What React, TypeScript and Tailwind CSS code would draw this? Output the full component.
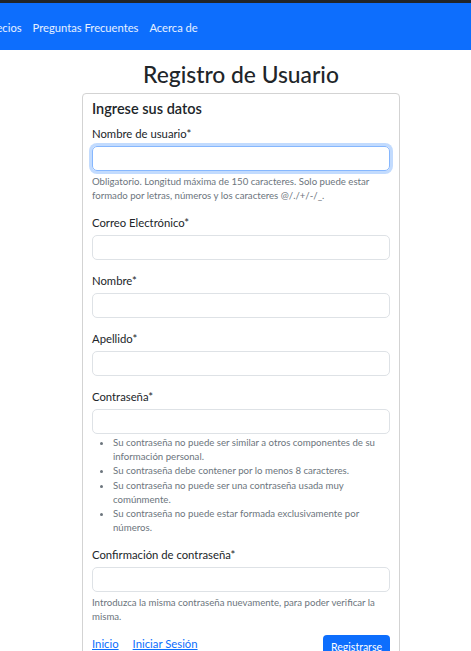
const font = { fontFamily: '"Lato", "Noto Sans", sans-serif' };

interface Field {
  label: string;
  focused?: boolean;
  help?: string;
  list?: string[];
}

const fields: Field[] = [
  {
    label: "Nombre de usuario*",
    focused: true,
    help: "Obligatorio. Longitud máxima de 150 caracteres. Solo puede estar formado por letras, números y los caracteres @/./+/-/_.",
  },
  { label: "Correo Electrónico*" },
  { label: "Nombre*" },
  { label: "Apellido*" },
  {
    label: "Contraseña*",
    list: [
      "Su contraseña no puede ser similar a otros componentes de su información personal.",
      "Su contraseña debe contener por lo menos 8 caracteres.",
      "Su contraseña no puede ser una contraseña usada muy comúnmente.",
      "Su contraseña no puede estar formada exclusivamente por números.",
    ],
  },
  {
    label: "Confirmación de contraseña*",
    help: "Introduzca la misma contraseña nuevamente, para poder verificar la misma.",
  },
];

export default function App() {
  return (
    <div className="min-h-[651px] bg-white text-[#212529] overflow-hidden" style={font}>
      <div className="h-[3px] bg-[#212529]" />
      {/* Navbar */}
      <nav className="h-[47px] bg-[#0d6efd] flex items-center pt-[3px] overflow-hidden">
        <div className="flex items-center gap-[11px] -ml-[14px] text-[11.2px] text-white/90">
          <span>Precios</span>
          <span>Preguntas Frecuentes</span>
          <span>Acerca de</span>
        </div>
      </nav>

      <div className="ml-[82px] w-[318px]">
        <h2 className="text-center text-[22.8px] font-medium leading-[28px] mt-[10px] mb-[5px]">
          Registro de Usuario
        </h2>

        <div className="border border-[#d3d3d3] rounded-[4px] px-[9px] pt-[4px]">
          <h5 className="text-[14.5px] font-semibold leading-[22px] mb-[5px]">Ingrese sus datos</h5>

          {fields.map((f, i) => (
            <div key={i} className="mb-[12px]">
              <label className="block text-[11.3px] leading-[18px] mb-[3px]">{f.label}</label>
              <input
                type="text"
                className={
                  f.focused
                    ? "block w-full h-[25px] rounded-[5px] border border-[#86b7fe] shadow-[0_0_0_3px_rgba(13,110,253,0.25)] outline-none"
                    : "block w-full h-[25px] rounded-[5px] border border-[#dee2e6] outline-none"
                }
              />
              {f.help && (
                <p className="mt-[3px] text-[9.65px] leading-[14px] text-[#6c757d]">{f.help}</p>
              )}
              {f.list && (
                <ul className="mt-[1px] pl-[21px] list-disc text-[9.65px] leading-[14.2px] text-[#6c757d]">
                  {f.list.map((t, j) => (
                    <li key={j}>{t}</li>
                  ))}
                </ul>
              )}
            </div>
          ))}

          <div className="flex items-start justify-between mt-[12px] pb-[10px]">
            <div className="flex gap-[14px] text-[11.3px] leading-[18px]">
              <a href="#" className="text-[#0d6efd] underline">Inicio</a>
              <a href="#" className="text-[#0d6efd] underline">Iniciar Sesión</a>
            </div>
            <button className="mt-[0px] bg-[#0d6efd] text-white text-[10.5px] rounded-[4px] px-[8px] h-[25px]">
              Registrarse
            </button>
          </div>
        </div>
      </div>
    </div>
  );
}
